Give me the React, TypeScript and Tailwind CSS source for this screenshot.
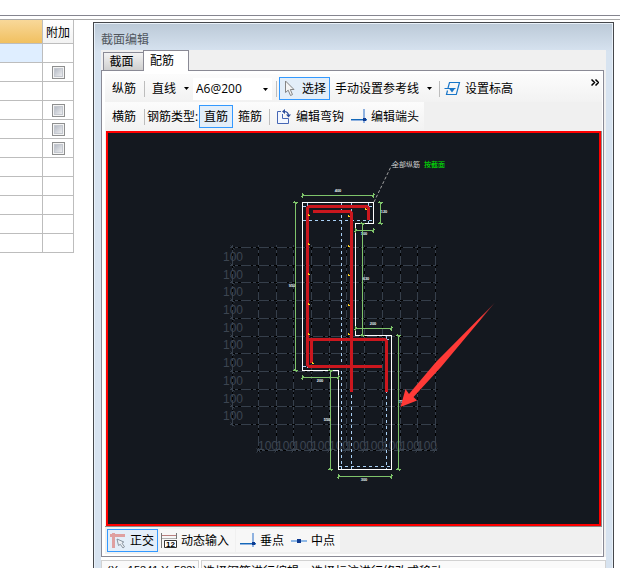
import { useState, type ReactNode } from "react";
import clsx from "clsx";

const tableRows = ["selected", "check", "plain", "check", "check", "check", "plain", "plain", "plain", "plain", "plain"];

const gridX = [258.5, 276.5, 293.5, 311.5, 329.5, 346.5, 364.5, 382.5, 400.5, 417.5, 435.5];
const gridY = [247.5, 265.5, 282.5, 300.5, 318.5, 336.5, 353.5, 371.5, 389.5, 406.5, 424.5];
const gridLabelY = [261, 279, 296, 314, 332, 349, 367, 385, 403, 420];
const gridLabelX = [258, 276, 293, 311, 329, 346, 364, 382, 400, 417];

type Dim = { x1: number; y1: number; x2: number; y2: number; label: string; lx: number; ly: number };

const dims: Dim[] = [
  { x1: 302.5, y1: 195.5, x2: 373.5, y2: 195.5, label: "400", lx: 338, ly: 192 },
  { x1: 295.5, y1: 202.5, x2: 295.5, y2: 370.5, label: "950", lx: 292, ly: 287 },
  { x1: 380.5, y1: 202.5, x2: 380.5, y2: 223.5, label: "120", lx: 384, ly: 213 },
  { x1: 355.5, y1: 230.5, x2: 373.5, y2: 230.5, label: "100", lx: 364, ly: 235 },
  { x1: 362.5, y1: 223.5, x2: 362.5, y2: 335.5, label: "630", lx: 366, ly: 280 },
  { x1: 355.5, y1: 328.5, x2: 391.5, y2: 328.5, label: "200", lx: 373, ly: 325 },
  { x1: 398.5, y1: 335.5, x2: 398.5, y2: 469.5, label: "750", lx: 402, ly: 403 },
  { x1: 302.5, y1: 377.5, x2: 338.5, y2: 377.5, label: "200", lx: 320, ly: 382 },
  { x1: 330.5, y1: 370.5, x2: 330.5, y2: 469.5, label: "550", lx: 327, ly: 421 },
  { x1: 338.5, y1: 476.5, x2: 391.5, y2: 476.5, label: "300", lx: 364, ly: 481 },
];

const barDots = [
  [308, 214], [308, 243], [308, 273], [308, 303], [308, 333], [348, 215], [348, 245],
  [348, 274], [348, 304], [348, 333], [312, 362], [365, 208],
];

function DimLine({ x1, y1, x2, y2, label, lx, ly }: Dim) {
  const vertical = x1 === x2;
  return (
    <g>
      <g stroke="#7fc46b" strokeWidth="1">
        <path d={`M${x1} ${y1}L${x2} ${y2}`} shapeRendering="crispEdges" />
        {[[x1, y1], [x2, y2]].map(([x, y]) => (
          <path key={`${x}-${y}`} d={vertical ? `M${x - 2.5} ${y}h5M${x - 1.5} ${y - 1.5}l3 3` : `M${x} ${y - 2.5}v5M${x - 1.5} ${y + 1.5}l3 -3`} />
        ))}
      </g>
      <text x={lx} y={ly} textAnchor="middle" fontSize="4" fontWeight="700" fill="#e8eef5">{label}</text>
    </g>
  );
}

function SectionDrawing() {
  const gridPath =
    gridY.map((y) => `M230 ${y}H438`).join("") +
    gridX.map((x) => `M${x} 245V452`).join("") +
    "M232.5 245V426M257 450.5H437";
  return (
    <svg viewBox="108 133 491 391" className="block w-full h-auto bg-[#14181f] font-['Liberation_Sans',sans-serif]" role="img" aria-label="配筋">
      <g fill="none" shapeRendering="crispEdges">
        <path d={gridPath} stroke="#363f4b" />
        <path d={gridPath} stroke="#000" strokeDasharray="3 10 2 3" strokeDashoffset="-8" />
      </g>
      <g fill="none" stroke="#363f4b">
        {[...gridY, 450.5].map((y) => <path key={y} d={`M${y === 450.5 ? 256.5 : 230.5} ${y - 2}l4 4`} />)}
        {gridX.map((x) => <path key={x} d={`M${x - 2} 452.5l4 -4`} />)}
      </g>
      <g fill="#3c4551" fontSize="12">
        {gridLabelY.map((y) => <text key={y} x="223" y={y}>100</text>)}
        {gridLabelX.map((x) => <text key={x} x={x} y="450">100</text>)}
      </g>

      <path
        d="M302.5 202.5H373.5V223.5H355.5V335.5H391.5V469.5H338.5V370.5H302.5Z"
        fill="none"
        stroke="#fff"
        shapeRendering="crispEdges"
      />
      <path
        d="M341.5 203V469M303 220.5H373M351.5 203V469M386.5 336V469M339 466.5H391M307.5 203V370M368.5 203V223M303 206.5H373M303 366.5H338M356 339.5H391"
        fill="none"
        stroke="#a9d0f5"
        strokeDasharray="3 3"
        shapeRendering="crispEdges"
      />
      <path
        d="M307.5 364V208L309 206.5H367L368.5 208V220M313 211.5H350L351.5 213V392M307.5 362V365L309 366.5H382M311.5 363V341L313 339.5H385L386.5 341V392M307 339.5H314"
        fill="none"
        stroke="#cb171e"
        strokeWidth="3"
      />
      {barDots.map(([x, y]) => (
        <path key={`${x}-${y}`} d={`M${x} ${y}h1v1h1v1h-2z`} fill="#ffd21f" />
      ))}
      {dims.map((d) => <DimLine key={`${d.x1}-${d.y1}-${d.x2}`} {...d} />)}

      <path d="M374 202L391.5 165.5H394" fill="none" stroke="#a0a0a0" strokeDasharray="3 2" />
      <g fontSize="7" className="font-['Noto_Sans_CJK_SC',sans-serif]">
        <text x="392" y="167" fill="#d2d2d2">全部纵筋</text>
        <text x="424" y="167" fill="#00f000">按截面</text>
      </g>

      <defs>
        <linearGradient id="pointer" gradientUnits="userSpaceOnUse" x1="495" y1="303" x2="480" y2="320">
          <stop offset="0" stopColor="#ff3a37" stopOpacity="0.3" />
          <stop offset="1" stopColor="#ff3a37" />
        </linearGradient>
      </defs>
      <path d="M400.5 407L405.5 389L409 394L436 362L495 302.5L441 367L413.5 397L417 400.5Z" fill="url(#pointer)" />
    </svg>
  );
}

function CursorIcon() {
  return (
    <svg width="12" height="17" viewBox="0 0 12 17" aria-hidden="true">
      <path d="M1.5 1V12.5L4.2 10.2L6.5 15.5L8.5 14.6L6.3 9.5H10Z" fill="#f4f4f4" stroke="#858585" strokeWidth="1" />
    </svg>
  );
}

function ElevationIcon() {
  return (
    <svg width="17" height="16" viewBox="0 0 17 16" fill="none" aria-hidden="true">
      <path d="M4 7L5.5 1.5H15.5L12.3 13.5H2.5L3.5 9.5M0.5 7.5H11.5" stroke="#1976c8" strokeWidth="1.2" />
      <path d="M5 7.5H11L8 11.5Z" fill="#1976c8" />
    </svg>
  );
}

function HookIcon() {
  return (
    <svg width="16" height="16" viewBox="0 0 16 16" fill="none" aria-hidden="true">
      <path d="M6.5 2.5H1.5V14.5H12.5V9.5H6.5Z" fill="#f3f7ff" />
      <path d="M5 2.5H1.5V14.5H12.5V9.5M6.5 5V9.5H12.5" stroke="#4667b5" />
      <path d="M8 2.5C11 2.5 12.5 4 12.5 7" stroke="#2b4c9b" strokeWidth="1.2" />
      <path d="M6 2.5L9 0V5ZM10 5.5H15L12.5 8.5Z" fill="#2b4c9b" />
    </svg>
  );
}

function EndIcon() {
  return (
    <svg width="17" height="16" viewBox="0 0 17 16" aria-hidden="true">
      <path d="M12 0H14V14H12Z" fill="#8fb2e0" />
      <path d="M0 10H16V11H0Z" fill="#1468b8" />
      <path d="M0 11H16V12H0Z" fill="#8fb2e0" />
      <path d="M12 9H15V12H12Z" fill="#0d3a91" />
    </svg>
  );
}

function MidIcon() {
  return (
    <svg width="17" height="16" viewBox="0 0 17 16" aria-hidden="true">
      <path d="M0 7H16V9H0Z" fill="#8fb8e6" />
      <path d="M6 6H10V10H6Z" fill="#0d3a91" />
    </svg>
  );
}

function OrthoIcon() {
  return (
    <svg width="16" height="17" viewBox="0 0 16 17" aria-hidden="true">
      <path d="M3.5 1V16M0 3.5H15" stroke="#dfa0a0" strokeWidth="3" />
      <path d="M7 7L8.5 13.5L10.3 12.3L13 16L14.5 14.8L12 11.2L13.8 10Z" fill="#eef2f6" stroke="#7f8a96" strokeWidth="0.9" />
    </svg>
  );
}

function DynamicInputIcon() {
  return (
    <svg width="17" height="17" viewBox="0 0 17 17" aria-hidden="true">
      <path d="M0.5 1V16M15.5 1V7" stroke="#777" />
      <path d="M1 3.5H15" stroke="#b98080" />
      <path d="M1 6.5H15" stroke="#b0b0b0" />
      <path d="M3.5 8.5H15.5V15.5H3.5Z" fill="#fff" stroke="#333" />
      <text x="9.5" y="15" textAnchor="middle" fontSize="8" fontWeight="700" fill="#000" className="font-['Liberation_Sans',sans-serif]">12</text>
    </svg>
  );
}

function Caret() {
  return (
    <svg width="5" height="3" viewBox="0 0 5 3" className="shrink-0" aria-hidden="true">
      <path d="M0 0H5L2.5 3Z" fill="#000" />
    </svg>
  );
}

function Separator({ className }: { className?: string }) {
  return <span className={clsx("w-px h-4 shrink-0 bg-[#bdbdbd]", className)} />;
}

type ToolButtonProps = {
  active?: boolean;
  icon?: ReactNode;
  caret?: boolean;
  className?: string;
  onClick?: () => void;
  children: ReactNode;
};

function ToolButton({ active, icon, caret, className, onClick, children }: ToolButtonProps) {
  return (
    <button
      type="button"
      onClick={onClick}
      className={clsx(
        "h-[23px] flex items-center shrink-0 border whitespace-nowrap",
        active ? "border-[#3399ff] bg-[#e3eef9]" : "border-transparent",
        className,
      )}
    >
      {icon}
      {children}
      {caret && <span className="ml-2"><Caret /></span>}
    </button>
  );
}

function AttachTable() {
  return (
    <table className="w-[74px] shrink-0 self-start table-fixed border-separate border-spacing-0">
      <thead>
        <tr className="h-6">
          <th className="w-[43px] p-0 border-r border-b border-[#bdbdbd] bg-linear-to-b from-[#f8d899] to-[#f1c05f]" />
          <th className="p-0 pt-[2px] border-r border-b border-[#bdbdbd] bg-linear-to-b from-white to-[#f2f2f2] font-normal">附加</th>
        </tr>
      </thead>
      <tbody>
        {tableRows.map((kind, i) => (
          <tr key={i} className="h-[19px]">
            <td className={clsx("p-0 border-r border-b border-[#bdbdbd]", kind === "selected" && "bg-[#dfeeff]")} />
            <td className="p-0 border-r border-b border-[#bdbdbd]">
              {kind === "check" && (
                <input
                  type="checkbox"
                  aria-label="附加"
                  className="block mx-auto size-[13px] appearance-none border border-[#8e8f8f] bg-linear-to-br from-[#a9afbb] to-[#fafafa] shadow-[inset_0_0_0_1px_#f4f4f4,inset_0_0_0_2px_#c4c8cf] checked:bg-[#3399ff]"
                />
              )}
            </td>
          </tr>
        ))}
      </tbody>
    </table>
  );
}

export default function App() {
  const [barType, setBarType] = useState("直筋");
  const [spec, setSpec] = useState("A6@200");
  const [ortho, setOrtho] = useState(true);

  return (
    <div className="h-screen overflow-hidden flex flex-col bg-white text-black text-xs font-['Open_Sans','Noto_Sans_CJK_SC',sans-serif]">
      <div className="h-4 shrink-0 border-b border-[#85858f]" />
      <div className="h-1 shrink-0 border-b border-[#a8a8a8]" />
      <main className="flex items-start">
        <AttachTable />

        <section className="ml-[19px] mr-[6px] mt-[2px] flex-1 min-w-0 border border-[#45474b] bg-[#d7e3f0]">
          <div className="border border-[#e9f1f9] px-[6px] bg-linear-to-b from-[#bccad8] to-[#d7e3f0] bg-size-[100%_28px] bg-no-repeat">
            <h1 className="h-[26px] pt-2 text-[#50565e]">截面编辑</h1>

            <div className="bg-[#f0f0f0]">
              <div role="tablist" className="flex items-end h-[21px] pl-[2px] relative z-10">
                <button type="button" role="tab" aria-selected="false" className="w-10 h-[19px] border border-r-0 border-[#8a8a95] bg-linear-to-b from-[#f3f3f3] to-[#cfcfcf] pr-1 pt-px">截面</button>
                <button type="button" role="tab" aria-selected="true" className="w-[46px] h-[21px] border border-b-0 border-[#8a8a95] bg-white pr-2">配筋</button>
              </div>

              <div role="tabpanel" className="-mt-px mr-[2px] border border-[#8a8a95] bg-white pt-[3px] pl-[3px] pr-px pb-[2px]">
                <div className="bg-[#f0f0f0] pb-px">
                  <div className="flex items-center h-7 pt-px pl-[6px] pr-[3px] bg-linear-to-b from-[#fcfcfc] to-[#f2f2f2]">
                    <ToolButton>纵筋</ToolButton>
                    <Separator className="ml-[7px] mr-[6px]" />
                    <ToolButton caret>直线</ToolButton>
                    <div className="relative ml-[3px] shrink-0">
                      <select
                        aria-label="纵筋"
                        value={spec}
                        onChange={(e) => setSpec(e.target.value)}
                        className="w-[79px] h-[22px] pl-[3px] appearance-none bg-white text-xs"
                      >
                        <option>A6@200</option>
                        <option>A8@200</option>
                      </select>
                      <span className="absolute right-1 top-[10px] pointer-events-none"><Caret /></span>
                    </div>
                    <Separator className="ml-1 mr-[2px]" />
                    <ToolButton active icon={<CursorIcon />} className="pl-1 pr-[3px] gap-[6px]">选择</ToolButton>
                    <ToolButton caret className="ml-1">手动设置参考线</ToolButton>
                    <Separator className="ml-[6px] mr-[3px]" />
                    <ToolButton icon={<ElevationIcon />} className="gap-1">设置标高</ToolButton>
                    <button type="button" aria-label="更多" className="ml-auto self-start mt-1">
                      <svg width="8" height="7" viewBox="0 0 8 7" fill="none" aria-hidden="true">
                        <path d="M0.5 0.5L3.5 3.5L0.5 6.5M4.5 0.5L7.5 3.5L4.5 6.5" stroke="#000" strokeWidth="1.5" />
                      </svg>
                    </button>
                  </div>
                  <div className="flex items-center w-fit h-7 pt-px pl-[6px] pr-1 bg-linear-to-b from-[#fcfcfc] to-[#f2f2f2]">
                    <ToolButton>横筋</ToolButton>
                    <Separator className="ml-[7px] mr-[2px]" />
                    <span className="w-[52px] whitespace-nowrap">钢筋类型:</span>
                    {["直筋", "箍筋"].map((name) => (
                      <ToolButton key={name} active={barType === name} onClick={() => setBarType(name)} className="px-1">{name}</ToolButton>
                    ))}
                    <Separator className="ml-[2px] mr-[5px]" />
                    <ToolButton icon={<HookIcon />} className="gap-1">编辑弯钩</ToolButton>
                    <ToolButton icon={<EndIcon />} className="ml-[5px] gap-[3px]">编辑端头</ToolButton>
                  </div>
                </div>

                <div className="pl-px bg-[#f0f0f0] border-r border-b border-[#8c8c8c]">
                  <div className="border-2 border-[#ff0000]">
                    <SectionDrawing />
                  </div>
                </div>

                <div className="flex items-center h-[27px] pl-[2px] bg-[#f0f0f0]">
                  <ToolButton active={ortho} onClick={() => setOrtho(!ortho)} icon={<OrthoIcon />} className="pl-[2px] pr-[3px] gap-1">正交</ToolButton>
                  <ToolButton icon={<DynamicInputIcon />} className="ml-[2px] gap-[3px] pr-[5px] bg-[#f7f7f7]">动态输入</ToolButton>
                  <div className="flex ml-px pl-[3px] pr-1 bg-[#f7f7f7]">
                    <ToolButton icon={<EndIcon />} className="gap-[3px]">垂点</ToolButton>
                    <ToolButton icon={<MidIcon />} className="ml-[5px] gap-[3px]">中点</ToolButton>
                  </div>
                </div>
              </div>

              <footer className="flex gap-[2px] pt-[3px] bg-white">
                <div className="w-[98px] shrink-0 h-6 pl-[5px] pt-[2px] border border-[#d2d2d2] bg-[#fafafa] text-[11px] whitespace-nowrap overflow-hidden font-['Liberation_Sans',sans-serif]">(X: -15341 Y: 583)</div>
                <div className="flex-1 h-6 pl-px pt-[3px] border border-[#d2d2d2] bg-[#fafafa] whitespace-nowrap overflow-hidden">选择钢筋进行编辑，选择标注进行修改或移动</div>
              </footer>
            </div>
          </div>
        </section>
      </main>
    </div>
  );
}
